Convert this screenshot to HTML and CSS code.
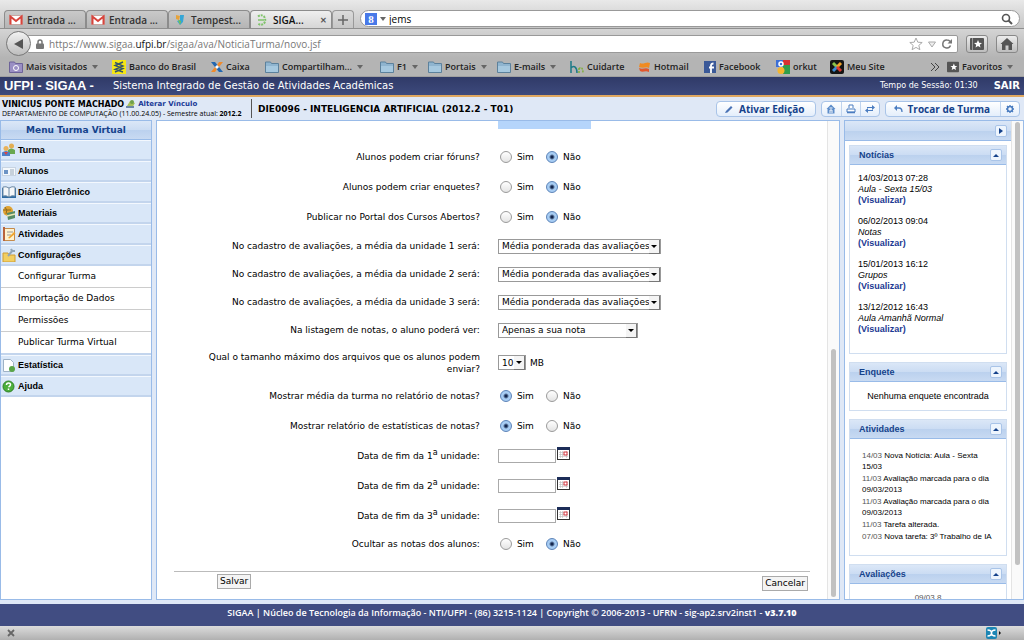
FILE: index.html
```html
<!DOCTYPE html>
<html lang="pt-BR">
<head>
<meta charset="utf-8">
<title>SIGAA - Sistema Integrado de Gestão de Atividades Acadêmicas</title>
<link rel="stylesheet" href="styles.css">
</head>
<body>
<svg class="defs" aria-hidden="true">
  <symbol id="gmail" viewBox="0 0 14 10"><rect x=".5" y=".5" width="13" height="9" fill="#fff" stroke="#c9a5a0"/><path d="M1.500 9.500V1.500L7 6l5.500-4.500v8" fill="none" stroke="#d8443c" stroke-width="2"/></symbol>
  <symbol id="folder" viewBox="0 0 14 12"><path d="M.5 11.500V1h5l1 1.500h7v9z" fill="#8fb4cf" stroke="#5c819c"/><path d="M1 5h12v6H1z" fill="#a6c8df"/></symbol>
  <symbol id="calendar" viewBox="0 0 13 13"><rect x=".5" y=".5" width="12" height="12" fill="#fff" stroke="#333"/><path d="M0 0h13v3H0z" fill="#1c2d58"/><path d="M2 5.500h9M2 7.500h9M2 9.500h9M3.500 4v7M5.500 4v7M9.500 4v7" stroke="#bbb" stroke-width=".6"/><rect x="7" y="5" width="3" height="3" fill="#fff" stroke="#d2333b"/></symbol>
</svg>

<header class="browser">
  <div class="tabstrip">
    <div class="tab"><svg class="i14"><use href="#gmail"/></svg><span>Entrada ...</span></div>
    <div class="tab"><svg class="i14"><use href="#gmail"/></svg><span>Entrada ...</span></div>
    <div class="tab"><svg class="i14" viewBox="0 0 14 14"><path d="M3 2l4 1-1 4-3-1z" fill="#e7a33a"/><path d="M7 2h4L10 9 7 12 4 8l3-1z" fill="#35a6d6"/><path d="M5 7l3 1-1 4z" fill="#7cc04b"/></svg><span>Tempest...</span></div>
    <div class="tab active"><svg class="i14" viewBox="0 0 14 14"><path d="M3 3.500Q6 1 9 3.500 11.500 7 9 10.500 6 13 3 10.500" fill="none" stroke="#7fc36a" stroke-width="2" stroke-dasharray="2 1"/><path d="M3 7h6" stroke="#7fc36a" stroke-width="1.500"/></svg><span>SIGA...</span><button class="close" aria-label="Fechar aba">✕</button></div>
    <button class="newtab" aria-label="Nova aba"><svg class="i10" viewBox="0 0 10 10"><path d="M5 0v10M0 5h10" stroke="#666" stroke-width="1.500"/></svg></button>
    <label class="search"><span class="google">8</span><i class="caret"></i><input type="text" value="jems" aria-label="Pesquisar"><svg class="i12" viewBox="0 0 12 12"><circle cx="5" cy="5" r="3.500" fill="none" stroke="#555" stroke-width="1.600"/><path d="M7.500 7.500L11 11" stroke="#555" stroke-width="2"/></svg></label>
  </div>
  <div class="navbar">
    <button class="back" aria-label="Voltar"><svg class="i14" viewBox="0 0 14 14"><path d="M11 2v10L2 7z" fill="#555"/></svg></button>
    <div class="address" role="textbox" aria-label="Endereço">
      <svg class="i10" viewBox="0 0 10 10"><path d="M3 5V3a2 2 0 014 0v2" fill="none" stroke="#777" stroke-width="1.500"/><rect x="1" y="4.500" width="8" height="5.500" rx="1" fill="#777"/></svg>
      <span class="url">https://www.sigaa.<b>ufpi.br</b>/sigaa/ava/NoticiaTurma/novo.jsf</span>
      <svg class="i14" viewBox="0 0 14 14"><path d="M7 1l1.800 4.200 4.400.3-3.400 2.900 1.100 4.300L7 10.400l-3.900 2.300 1.100-4.300L.8 5.500l4.400-.3z" fill="#fff" stroke="#aaa"/></svg>
      <svg class="i10" viewBox="0 0 10 10"><path d="M1.500 3h7L5 8z" fill="#eee" stroke="#aaa"/></svg>
      <svg class="i12" viewBox="0 0 12 12"><path d="M9.500 7.500A4 4 0 116 2c1.500 0 2.500.6 3.200 1.500" fill="none" stroke="#777" stroke-width="1.500"/><path d="M11 1v4.500H6.500z" fill="#777"/></svg>
    </div>
    <button class="tool" aria-label="Favoritos"><svg class="i14" viewBox="0 0 14 12"><rect width="14" height="12" rx="1" fill="#555"/><path d="M2.500 0v12" stroke="#999"/><path d="M8 2l1.200 2.700 2.800.2-2.200 1.800.7 2.800L8 8 5.500 9.500l.7-2.800L4 4.900l2.800-.2z" fill="#fff"/></svg></button>
    <button class="tool" aria-label="Página inicial"><svg class="i14" viewBox="0 0 14 12"><path d="M7 0l6.500 6H12v6H8.500V7.500h-3V12H2V6H.5z" fill="#555"/></svg></button>
  </div>
  <nav class="bookmarks">
    <a href="#"><svg class="i14" viewBox="0 0 14 12"><path d="M.5 11.500V1h5l1 1.500h7v9z" fill="#9a8fc4" stroke="#6d6399"/><circle cx="7" cy="7" r="2.500" fill="none" stroke="#fff"/></svg>Mais visitados<i class="caret"></i></a>
    <a href="#"><svg class="i14" viewBox="0 0 14 14"><rect width="14" height="14" fill="#f5e614"/><path d="M11 2L3 5.500l8 3L3 12M3 2.500l8 3.500-8 3.500 8 2.500" fill="none" stroke="#35556b" stroke-width="1.400"/></svg>Banco do Brasil</a>
    <a href="#"><svg class="i12" viewBox="0 0 12 12"><path d="M0 1h4l8 10H8z" fill="#2367b1"/><path d="M8 1h4L8 6 6 4zM4 6l2 2-2 3H0z" fill="#f08a2c"/><path d="M4 6l2-2 2 2-2 2z" fill="#fff"/></svg>Caixa</a>
    <a href="#"><svg class="i14"><use href="#folder"/></svg>Compartilham...<i class="caret"></i></a>
    <a href="#"><svg class="i14"><use href="#folder"/></svg>F1<i class="caret"></i></a>
    <a href="#"><svg class="i14"><use href="#folder"/></svg>Portais<i class="caret"></i></a>
    <a href="#"><svg class="i14"><use href="#folder"/></svg>E-mails<i class="caret"></i></a>
    <a href="#"><svg class="i14" viewBox="0 0 14 14"><path d="M1 1v12M1 8c3-3 6-1 6 5" fill="none" stroke="#1b7a86" stroke-width="1.500"/><path d="M9 13V7M9 9c2-3 4-1 4 4" fill="none" stroke="#7fae3c" stroke-width="1.500" stroke-dasharray="2 1"/></svg>Cuidarte</a>
    <a href="#"><svg class="i12" viewBox="0 0 12 12"><path d="M1 2c4 2 6-2 10 0L10 7C7 5 5 8 0 6z" fill="#f08b22"/><path d="M0 7c4 2 6-1 10 1v3C6 9 4 12 1 10z" fill="#e2572c"/></svg>Hotmail</a>
    <a href="#"><svg class="i12" viewBox="0 0 12 12"><rect width="12" height="12" fill="#3b5998"/><path d="M7 12V4.500Q7 2.500 9.500 2.500M5 6.500h5" fill="none" stroke="#fff" stroke-width="1.800"/></svg>Facebook</a>
    <a href="#"><svg class="i14" viewBox="0 0 14 14"><path d="M0 0h7v7H0z" fill="#3c6fd6"/><path d="M7 0h7v5H7z" fill="#d63232"/><path d="M7 5h7v9H7z" fill="#2f9d4c"/><circle cx="5" cy="4" r="2" fill="none" stroke="#fff" stroke-width="1.500"/><circle cx="5" cy="10.500" r="3.500" fill="#f5b52e"/></svg>orkut</a>
    <a href="#"><svg class="i14" viewBox="0 0 14 14"><rect width="14" height="14" rx="2" fill="#151515"/><path d="M3 3l4 4" stroke="#8bc34a" stroke-width="3"/><path d="M11 3L7 7" stroke="#f0a32a" stroke-width="3"/><path d="M3 11l4-4" stroke="#3c8bd6" stroke-width="3"/><path d="M11 11L7 7" stroke="#dc3b32" stroke-width="3"/></svg>Meu Site</a>
    <button class="more" aria-label="Mais favoritos"><svg class="i10" viewBox="0 0 10 10"><path d="M1 1l4 4-4 4M5 1l4 4-4 4" fill="none" stroke="#444"/></svg></button>
    <a href="#"><svg class="i12" viewBox="0 0 14 12"><rect width="14" height="12" rx="1" fill="#555"/><path d="M8 2l1.200 2.700 2.800.2-2.200 1.800.7 2.800L8 8 5.500 9.500l.7-2.800L4 4.900l2.800-.2z" fill="#fff"/></svg>Favoritos<i class="caret"></i></a>
  </nav>
</header>

<div class="brand">
  <strong class="logo">UFPI - SIGAA -</strong><span class="system">Sistema Integrado de Gestão de Atividades Acadêmicas</span>
  <span class="session">Tempo de Sessão: 01:30</span><a class="exit" href="#">SAIR</a>
</div>

<div class="context">
  <div class="user">
    <p class="name"><strong>VINICIUS PONTE MACHADO</strong><svg class="i10" viewBox="0 0 10 10"><path d="M1 7l3-5 5 2-3 5z" fill="#a7bf5a"/><path d="M0 8h8" stroke="#6c87a8" stroke-width="2"/><circle cx="6" cy="3" r="2" fill="#6fa04a"/></svg><a href="#">Alterar Vínculo</a></p>
    <p class="dept">DEPARTAMENTO DE COMPUTAÇÃO (11.00.24.05) - Semestre atual: <strong>2012.2</strong></p>
  </div>
  <h1 class="course">DIE0096 - INTELIGENCIA ARTIFICIAL (2012.2 - T01)</h1>
  <div class="actions">
    <div class="group"><button class="wide edit"><svg class="i10" viewBox="0 0 10 10"><path d="M1 9l1-2 5-5 1.500 1.500-5 5z" fill="#4a73b5"/></svg>Ativar Edição</button></div>
    <div class="group">
      <button class="small" aria-label="Início"><svg class="i10" viewBox="0 0 10 10"><path d="M5 .5L9.500 5H8.500v4.500h-7V5H.5z" fill="#5b8bc9"/><path d="M4 9V6h2v3M3.500 4h3" stroke="#fff" fill="none"/></svg></button>
      <button class="small" aria-label="Imprimir"><svg class="i10" viewBox="0 0 10 10"><path d="M3 4V1h4v3M1 5h8v3H1z" fill="#fff" stroke="#4a7cc0"/><path d="M1 8.500h8" stroke="#4a7cc0" stroke-width="1.500"/></svg></button>
      <button class="small" aria-label="Alternar"><svg class="i10" viewBox="0 0 10 10"><path d="M2 3.500h6M2 6.500h6" stroke="#4a7cc0"/><path d="M7 1l3 2.500L7 6zM3 4L0 6.500 3 9z" fill="#4a7cc0"/></svg></button>
    </div>
    <div class="group">
      <button class="wide switch"><svg class="i10" viewBox="0 0 10 10"><path d="M2 4h4q3 0 3 4" fill="none" stroke="#4a7cc0" stroke-width="1.300"/><path d="M4 1L1 4l3 3z" fill="#4a7cc0"/></svg>Trocar de Turma</button>
      <button class="small" aria-label="Configurações"><svg class="i10" viewBox="0 0 10 10"><circle cx="5" cy="5" r="2.500" fill="none" stroke="#4a7cc0" stroke-width="1.500"/><path d="M5 1v2M5 7v2M1 5h2M7 5h2M2 2l1.500 1.500M8 2L6.500 3.500M2 8l1.500-1.500M8 8L6.500 6.500" stroke="#4a7cc0" stroke-width="1.300"/></svg></button>
    </div>
  </div>
</div>

<div class="workspace">
  <aside class="menu">
    <h2 class="bar">Menu Turma Virtual</h2>
    <ul class="entries">
      <li><a href="#"><svg class="i14" viewBox="0 0 14 14"><circle cx="9.500" cy="3" r="2.500" fill="#e2ae52"/><path d="M6 11V7q3-3 7 0v4z" fill="#6aa84f"/><circle cx="4" cy="5.500" r="2.500" fill="#e8b25c"/><path d="M0 13V9.500q4-3 8 0V13z" fill="#4b80c8"/><path d="M2 9l2 3 2-3z" fill="#d44"/></svg>Turma</a></li>
      <li><a href="#"><svg class="i14" viewBox="0 0 14 14"><rect x=".5" y="3.500" width="13" height="8" fill="#f4f8fc" stroke="#c8d4e2"/><rect x="2" y="6" width="4" height="4" fill="#6c93c4"/><path d="M8 6h4M8 8h4M8 10h4" stroke="#9ab"/></svg>Alunos</a></li>
      <li><a href="#"><svg class="i14" viewBox="0 0 14 14"><path d="M0 3h14v10H0z" fill="#2d6ba3"/><path d="M1 2q3-1 6 1 3-2 6-1v9q-3-1-6 1-3-2-6-1z" fill="#f4f7fa" stroke="#6f8ba6"/><path d="M7 3v9" stroke="#6f8ba6"/></svg>Diário Eletrônico</a></li>
      <li><a href="#"><svg class="i14" viewBox="0 0 14 14"><circle cx="6" cy="5" r="5" fill="#e0a333"/><path d="M3 1q3 3 1 7M1 4h8" stroke="#8e6a21" fill="none"/><path d="M5 7l8-2v7l-7 2z" fill="#568c66"/><path d="M5 10l8-2" stroke="#e9e6b2" stroke-width="1.500"/></svg>Materiais</a></li>
      <li><a href="#"><svg class="i14" viewBox="0 0 14 14"><path d="M1.500 1.500h11v12h-11z" fill="#fff3cf" stroke="#c58b4c"/><path d="M2 0v14" stroke="#b8643d" stroke-width="2"/><path d="M5 5h6M5 8h4" stroke="#999"/><path d="M6 11l6-6 1.500 1.500-6 5z" fill="#f0a52d"/></svg>Atividades</a></li>
      <li><a href="#"><svg class="i14" viewBox="0 0 14 14"><path d="M1 5h5l1 2h6v7H1z" fill="#f2cf62" stroke="#cf9d34"/><path d="M6 8l5-6M9 1l1 2 3 0" stroke="#92a6b8" stroke-width="2" fill="none"/></svg>Configurações</a>
        <ul class="sub">
          <li><a href="#">Configurar Turma</a></li>
          <li><a href="#">Importação de Dados</a></li>
          <li><a href="#">Permissões</a></li>
          <li><a href="#">Publicar Turma Virtual</a></li>
        </ul></li>
      <li><a href="#"><svg class="i14" viewBox="0 0 14 14"><path d="M1.500 1.500h7l3 3v9h-10z" fill="#fff" stroke="#9eb2c6"/><circle cx="10" cy="11" r="3" fill="#5aa648"/></svg>Estatística</a></li>
      <li><a href="#"><svg class="i14" viewBox="0 0 14 14"><circle cx="6.500" cy="7.500" r="5.500" fill="#4caf3b" stroke="#2f7f27"/><path d="M4.500 6q0-2 2-2t2 1.800q0 1-2 2.200M6.500 9.500v1.500" fill="none" stroke="#fff" stroke-width="1.500"/></svg>Ajuda</a></li>
    </ul>
  </aside>

  <main class="content">
    <form class="page">
      <div class="strip row"><span></span><span class="selection"></span></div>
      <fieldset class="row radio"><legend>Alunos podem criar fóruns?</legend><div class="value"><label><input type="radio" name="forum">Sim</label><label><input type="radio" name="forum" checked>Não</label></div></fieldset>
      <fieldset class="row radio"><legend>Alunos podem criar enquetes?</legend><div class="value"><label><input type="radio" name="poll">Sim</label><label><input type="radio" name="poll" checked>Não</label></div></fieldset>
      <fieldset class="row radio"><legend>Publicar no Portal dos Cursos Abertos?</legend><div class="value"><label><input type="radio" name="open">Sim</label><label><input type="radio" name="open" checked>Não</label></div></fieldset>
      <div class="row pick"><label for="u1">No cadastro de avaliações, a média da unidade 1 será:</label><div class="value"><span class="select w-long"><select id="u1"><option>Média ponderada das avaliações</option></select></span></div></div>
      <div class="row pick"><label for="u2">No cadastro de avaliações, a média da unidade 2 será:</label><div class="value"><span class="select w-long"><select id="u2"><option>Média ponderada das avaliações</option></select></span></div></div>
      <div class="row pick"><label for="u3">No cadastro de avaliações, a média da unidade 3 será:</label><div class="value"><span class="select w-long"><select id="u3"><option>Média ponderada das avaliações</option></select></span></div></div>
      <div class="row pick"><label for="list">Na listagem de notas, o aluno poderá ver:</label><div class="value"><span class="select w-mid"><select id="list"><option>Apenas a sua nota</option></select></span></div></div>
      <div class="row size"><label for="max">Qual o tamanho máximo dos arquivos que os alunos podem enviar?</label><div class="value"><span class="select w-short"><select id="max"><option>10</option></select></span><span class="unit">MB</span></div></div>
      <fieldset class="row radio"><legend>Mostrar média da turma no relatório de notas?</legend><div class="value"><label><input type="radio" name="avg" checked>Sim</label><label><input type="radio" name="avg">Não</label></div></fieldset>
      <fieldset class="row radio"><legend>Mostrar relatório de estatísticas de notas?</legend><div class="value"><label><input type="radio" name="stats" checked>Sim</label><label><input type="radio" name="stats">Não</label></div></fieldset>
      <div class="row date"><label for="d1">Data de fim da 1<sup>a</sup> unidade:</label><div class="value"><input type="text" id="d1"><button type="button" aria-label="Calendário"><svg class="i13"><use href="#calendar"/></svg></button></div></div>
      <div class="row date"><label for="d2">Data de fim da 2<sup>a</sup> unidade:</label><div class="value"><input type="text" id="d2"><button type="button" aria-label="Calendário"><svg class="i13"><use href="#calendar"/></svg></button></div></div>
      <div class="row date"><label for="d3">Data de fim da 3<sup>a</sup> unidade:</label><div class="value"><input type="text" id="d3"><button type="button" aria-label="Calendário"><svg class="i13"><use href="#calendar"/></svg></button></div></div>
      <fieldset class="row last"><legend>Ocultar as notas dos alunos:</legend><div class="value"><label><input type="radio" name="hide">Sim</label><label><input type="radio" name="hide" checked>Não</label></div></fieldset>
      <div class="buttons"><button type="submit" class="save">Salvar</button><button type="button" class="cancel">Cancelar</button></div>
    </form>
    <div class="track"><div class="thumb lower"></div></div>
  </main>

  <aside class="side">
    <div class="sidecol">
      <div class="bar sidebar-head"><button class="toggle" aria-label="Recolher"><i class="tri-right"></i></button></div>
      <div class="cards">
        <section class="card"><h3 class="bar">Notícias<button class="toggle" aria-label="Recolher"><i class="tri-up"></i></button></h3>
          <div class="news">
            <p>14/03/2013 07:28<br><em>Aula - Sexta 15/03</em><br><a href="#">(Visualizar)</a></p>
            <p>06/02/2013 09:04<br><em>Notas</em><br><a href="#">(Visualizar)</a></p>
            <p>15/01/2013 16:12<br><em>Grupos</em><br><a href="#">(Visualizar)</a></p>
            <p>13/12/2012 16:43<br><em>Aula Amanhã Normal</em><br><a href="#">(Visualizar)</a></p>
          </div></section>
        <section class="card"><h3 class="bar">Enquete<button class="toggle" aria-label="Recolher"><i class="tri-up"></i></button></h3>
          <p class="empty">Nenhuma enquete encontrada</p></section>
        <section class="card"><h3 class="bar">Atividades<button class="toggle" aria-label="Recolher"><i class="tri-up"></i></button></h3>
          <ul class="feed">
            <li><time>14/03</time> Nova Notícia: Aula - Sexta 15/03</li>
            <li><time>11/03</time> Avaliação marcada para o dia 09/03/2013</li>
            <li><time>11/03</time> Avaliação marcada para o dia 09/03/2013</li>
            <li><time>11/03</time> Tarefa alterada.</li>
            <li><time>07/03</time> Nova tarefa: 3º Trabalho de IA</li>
          </ul></section>
        <section class="card"><h3 class="bar">Avaliações<button class="toggle" aria-label="Recolher"><i class="tri-up"></i></button></h3>
          <p class="exam">09/03 8</p></section>
      </div>
    </div>
    <div class="track"><div class="thumb upper"></div></div>
  </aside>
</div>

<footer class="footer">SIGAA | Núcleo de Tecnologia da Informação - NTI/UFPI - (86) 3215-1124 | Copyright © 2006-2013 - UFRN - sig-ap2.srv2inst1 - <strong>v3.7.10</strong></footer>
<div class="status"><button aria-label="Fechar barra"><svg class="i10" viewBox="0 0 10 10"><path d="M2 2l6 6M8 2L2 8" stroke="#666" stroke-width="1.800"/></svg></button>
  <svg class="addon" viewBox="0 0 16 12"><rect width="11" height="12" rx="2" fill="#1d86b4"/><path d="M1.500 3q4 0 4 3t4 3M9.500 3q-4 0-4 3t-4 3" fill="none" stroke="#fff" stroke-width="1.500"/><path d="M13 4l2 2-2 2z" fill="#111"/></svg></div>
</body>
</html>
```
FILE: styles.css
```css
* { box-sizing: border-box; }
body {
  margin: 0;
  height: 100vh;
  display: flex;
  flex-direction: column;
  overflow: hidden;
  background: #dfe8f6;
  color: #000;
  font: 9px/12px Verdana, "DejaVu Sans", sans-serif;
}
p, ul, h1, h2, h3, fieldset { margin: 0; padding: 0; }
ul { list-style: none; }
a { color: inherit; text-decoration: none; }
button, input, select { font: inherit; color: inherit; margin: 0; }
button { padding: 0; border: 0; background: none; }
svg { flex: none; display: block; }
.defs { position: absolute; width: 0; height: 0; }
.i10 { width: 10px; height: 10px; }
.i12 { width: 12px; height: 12px; }
.i13 { width: 13px; height: 13px; }
.i14 { width: 14px; height: 14px; }
.caret { border: 3px solid transparent; border-top: 4px solid #666; border-bottom: 0; flex: none; }

/* browser window */
.browser { font-family: "Lucida Grande", "Open Sans", sans-serif; background: #b4b4b4; }
.tabstrip {
  height: 29px;
  display: flex;
  align-items: flex-end;
  padding: 0 4px;
  background: linear-gradient(#e9e9e9, #c6c6c6);
  border-bottom: 1px solid #8f8f8f;
  font-size: 10px;
}
.tab {
  height: 18px;
  flex: 0 1 82px;
  display: flex;
  align-items: center;
  gap: 4px;
  padding: 0 4px;
  font-weight: 600;
  color: #333;
  white-space: nowrap;
  background: linear-gradient(#c9c9c9, #b5b5b5);
  border: 1px solid #8c8c8c;
  border-bottom: 0;
  border-radius: 4px 4px 0 0;
}
.tab span { flex: 1; }
.tab.active { background: linear-gradient(#efefef, #d6d6d6); color: #111; }
.close { font-size: 8px; color: #555; }
.newtab { width: 22px; height: 18px; display: grid; place-items: center; border: 1px solid #999; border-bottom: 0; border-radius: 4px 4px 0 0; }
.search {
  flex: 1;
  height: 17px;
  margin: 0 0 1px 6px;
  padding: 0 6px 0 4px;
  display: flex;
  align-items: center;
  gap: 3px;
  background: #fff;
  border: 1px solid #999;
  border-radius: 9px;
}
.search input { flex: 1; min-width: 0; border: 0; padding: 0; background: none; outline: 0; }
.google { width: 12px; height: 12px; background: #4879e8; color: #fff; font: bold 11px/12px "Liberation Serif", serif; text-align: center; }
.navbar {
  height: 29px;
  display: flex;
  align-items: center;
  gap: 8px;
  padding: 0 6px;
  background: linear-gradient(#d4d4d4, #b4b4b4);
}
.back { width: 25px; height: 25px; display: grid; place-items: center; border: 1px solid #777; border-radius: 50%; background: linear-gradient(#f2f2f2, #bdbdbd); z-index: 1; }
.address {
  flex: 1;
  height: 18px;
  margin-left: -12px;
  padding: 0 4px 0 7px;
  display: flex;
  align-items: center;
  gap: 4px;
  background: #fff;
  border: 1px solid #999;
  border-radius: 2px;
  font-size: 10px;
  color: #777;
}
.url { flex: 1; }
.url b { font-weight: 400; color: #111; }
.tool { width: 22px; height: 18px; display: grid; place-items: center; border: 1px solid #888; border-radius: 3px; background: linear-gradient(#ececec, #bdbdbd); }
.bookmarks {
  height: 19px;
  padding-left: 9px;
  display: grid;
  grid-template-columns: 103fr 99fr 54fr 115fr 48fr 69fr 73fr 69fr 65fr 72fr 54fr 100fr 17fr 77fr;
  align-items: center;
  font-weight: 600;
  color: #222;
  white-space: nowrap;
  border-bottom: 1px solid #a0a0a0;
}
.bookmarks a { display: flex; align-items: center; gap: 3px; min-width: 0; }
.bookmarks .caret { margin-left: 2px; }

/* application header */
.brand {
  height: 20px;
  padding: 0 4px;
  display: flex;
  align-items: center;
  background: linear-gradient(#303a68, #3d4a7c);
  border-bottom: 2px solid #e0a860;
  color: #fff;
}
.logo { font: bold 13px/16px "Liberation Sans", Arial, sans-serif; width: 109px; }
.system { flex: 1; font-size: 10px; }
.session { font-size: 8px; }
.exit { margin-left: 16px; font-size: 10px; font-weight: bold; }
.context { height: 23px; display: flex; align-items: center; padding: 0 4px 0 2px; background: #dfe8f6; }
.user { width: 250px; padding-right: 2px; border-right: 1px solid #555; font-size: 7px; line-height: 9px; white-space: nowrap; }
.name { display: flex; align-items: center; gap: 2px; font-size: 8px; }
.name a { color: #1a3a96; font-weight: bold; font-size: 7px; }
.dept { font-family: "Open Sans", sans-serif; }
.course { flex: 1; margin-left: 6px; font-size: 9px; font-weight: bold; }
.actions { display: flex; gap: 5px; }
.group { display: flex; height: 16px; border: 1px solid #a9c4e8; border-radius: 4px; background: linear-gradient(#fff, #e4eefb); overflow: hidden; }
.group button { display: flex; align-items: center; justify-content: center; gap: 5px; }
.group button + button { border-left: 1px solid #c0d4ee; }
.small { width: 19px; }
.wide { padding: 0 10px 0 7px; font: bold 10px/14px "Trebuchet MS", "Open Sans", sans-serif; color: #15428b; }

/* workspace */
.workspace { flex: 1; min-height: 0; display: flex; gap: 4px; padding-bottom: 4px; }
.menu, .content, .side { background: #fff; border: 1px solid #99bbe8; overflow: hidden; }
.menu { width: 152px; }
.content { flex: 1; display: flex; }
.side { width: 180px; display: flex; }
.bar { background: linear-gradient(#dbe7f7, #cbdcf3 50%, #bbd1ee 51%, #c8daf2); border-bottom: 1px solid #99bbe8; color: #15428b; font-weight: bold; }
.menu .bar { height: 19px; font-size: 9px; line-height: 18px; text-align: center; }
.entries > li > a {
  height: 21px;
  padding-left: 1px;
  display: flex;
  align-items: center;
  gap: 2px;
  background: #d9e7f8;
  border-top: 1px solid #f3f8fe;
  border-bottom: 2px solid #c3d5ed;
  font: bold 9px/12px "Liberation Sans", Arial, sans-serif;
}
.sub li { height: 22px; padding-left: 17px; line-height: 20px; border-bottom: 1px solid #ccc; }
.sub li:last-child { height: 23px; border-bottom: 2px solid #c3d5ed; }

.page { flex: 1; padding: 0 17px; }
.row { display: grid; grid-template-columns: 99fr 101fr; column-gap: 18px; align-items: center; border: 0; min-width: 0; }
.row > label, .row > legend { justify-self: end; max-width: 280px; text-align: right; padding: 0; }
.row > legend { float: left; }
.strip { height: 21px; align-items: start; }
.selection { width: 93px; height: 8px; background: #b5d5fb; }
.value { display: flex; align-items: center; }
.radio { height: 30px; }
.pick { height: 28px; }
.size { height: 37px; }
.date { height: 30px; }
.last { height: 26px; }
.value label { width: 46px; display: flex; align-items: center; gap: 5px; padding-left: 2px; }
input[type="radio"] { appearance: none; width: 12px; height: 12px; border: 1px solid #9a9a9a; border-radius: 50%; background: linear-gradient(#fff, #e4e4e4); }
input[type="radio"]:checked { border-color: #5c83b8; background: radial-gradient(circle, #14264d 0 1px, #a8cdf3 3px, #a3cbf5); }
.select { position: relative; display: block; }
.w-long { width: 163px; }
.w-mid { width: 140px; }
.w-short { width: 28px; }
.select select { appearance: none; display: block; width: 100%; height: 15px; padding: 0 0 0 3px; border: 1px solid #999; border-radius: 0; background: #fff; }
.select::before { content: ""; position: absolute; right: 1px; top: 1px; width: 10px; height: 13px; background: #f4f4f4; border-right: 1px solid #777; border-bottom: 1px solid #777; pointer-events: none; }
.select::after { content: ""; position: absolute; right: 4px; top: 6px; border: 3px solid transparent; border-top-color: #000; border-bottom: 0; pointer-events: none; }
.unit { margin-left: 4px; }
sup { font-size: 8px; line-height: 0; }
.date input { width: 58px; height: 14px; padding: 0 2px; border: 1px solid #aaa; }
.date .value { gap: 1px; }
.date button { align-self: flex-start; padding-bottom: 6px; }
.buttons { margin-top: 14px; padding: 2px 2px 0 43px; display: flex; justify-content: space-between; border-top: 1px solid #bbb; }
.buttons button { height: 15px; padding: 0 2px; font-size: 9px; line-height: 13px; border: 1px solid #aaa; background: #f4f4f4; }
.buttons .cancel { margin-top: 2px; }
.track { width: 12px; padding: 1px 3px; background: #fafafa; border-left: 1px solid #e4e4e4; }
.thumb { border-radius: 3px; background: #c1c1c1; }
.lower { height: 52%; margin-top: 227px; }
.upper { height: 93%; }

.side { font-family: "Liberation Sans", Arial, sans-serif; }
.sidecol { flex: 1; min-width: 0; }
.sidebar-head { height: 20px; padding: 0 4px; display: flex; align-items: center; justify-content: flex-end; }
.cards { padding: 4px 4px 0; display: grid; gap: 8px; }
.card { border: 1px solid #d0def0; }
.card .bar { height: 19px; padding: 0 4px 0 9px; display: flex; align-items: center; justify-content: space-between; font-size: 9px; }
.toggle { width: 12px; height: 12px; display: grid; place-items: center; border: 1px solid #a9c4e8; border-radius: 2px; background: #eef5fd; }
.tri-right { border: 3px solid transparent; border-left: 4px solid #15428b; border-right: 0; }
.tri-up { border: 3px solid transparent; border-bottom-color: #15428b; border-top: 0; }
.news { padding: 8px 8px 18px; line-height: 11px; display: grid; gap: 10px; }
.news a { color: #1c3a93; font-weight: bold; }
.empty { padding: 8px 0; text-align: center; line-height: 12px; }
.feed { padding: 11px 12px 13px; font-size: 8px; line-height: 11px; display: grid; gap: 1px; }
.feed time { color: #555; }
.exam { padding-top: 8px; text-align: center; font-size: 8px; color: #555; }

.footer { height: 22px; padding: 3px 0; background: #414d82; color: #fff; font-family: "Open Sans", sans-serif; font-weight: 600; text-align: center; }
.status { height: 14px; padding: 0 20px 0 6px; display: flex; align-items: center; justify-content: space-between; background: linear-gradient(#dcdcdc, #b0b0b0); }
.addon { width: 20px; height: 12px; }
```
